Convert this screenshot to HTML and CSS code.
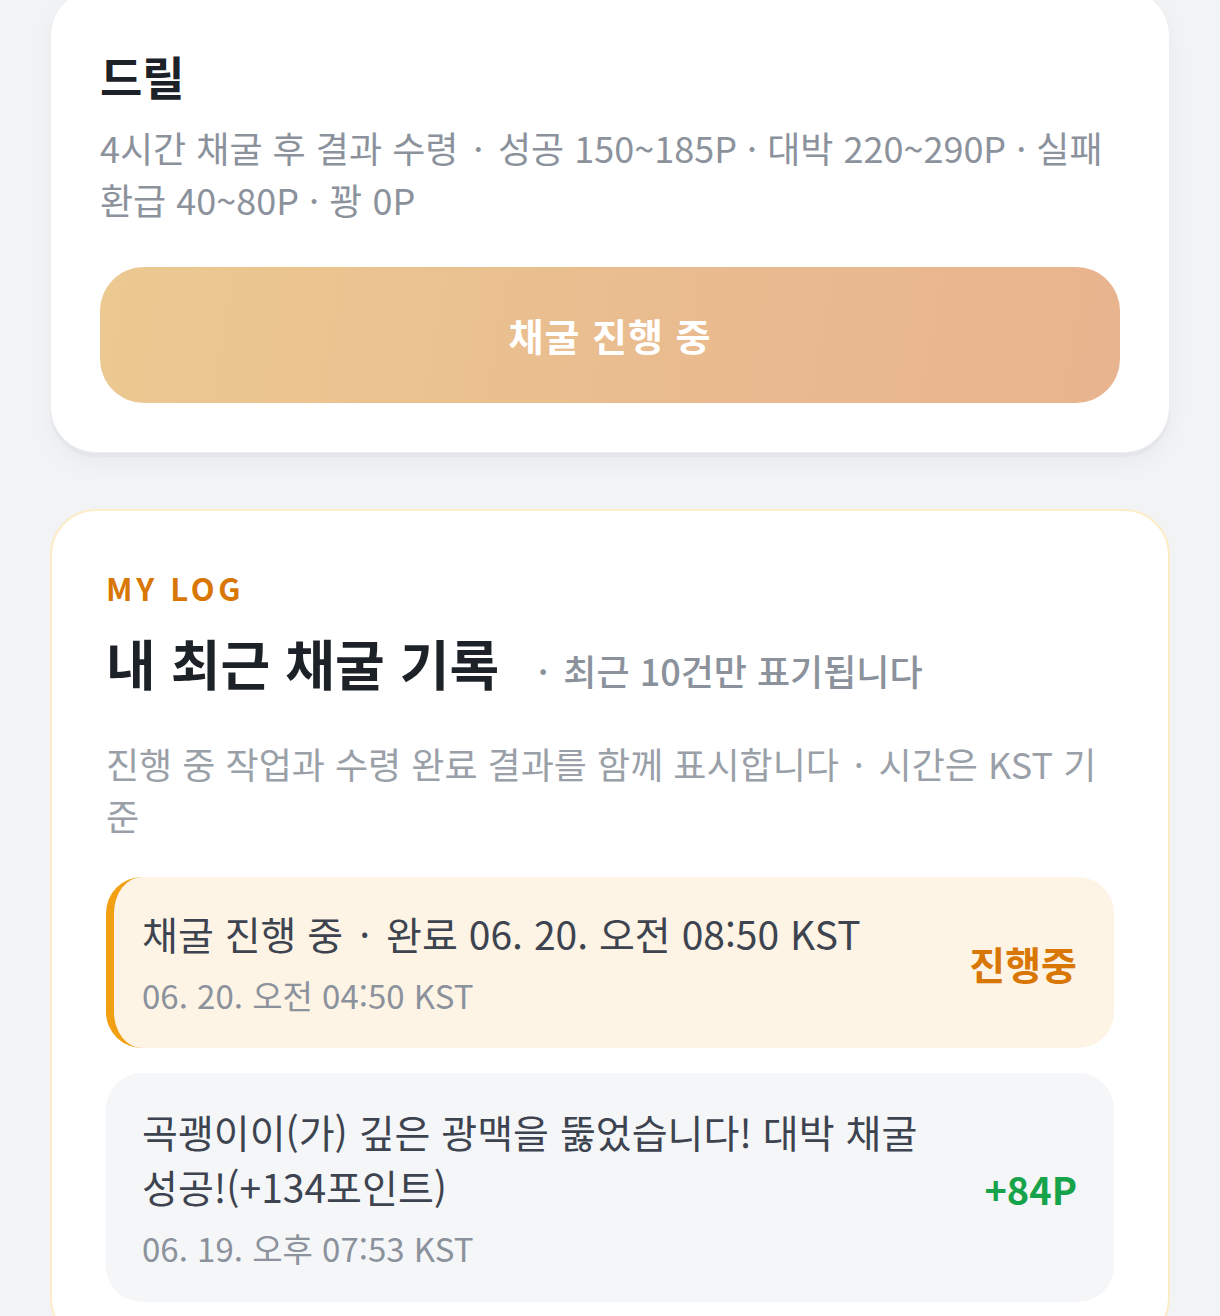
FILE: index.html
```html
<!DOCTYPE html>
<html lang="ko">
<head>
<meta charset="utf-8">
<link rel="stylesheet" href="styles.css">
</head>
<body>
<main class="page">
  <section class="card tool-card">
    <h2 class="tool-title">드릴</h2>
    <p class="tool-desc">4시간 채굴 후 결과 수령 <span class="sep">·</span> 성공 150~185P · 대박 220~290P · 실패 환급 40~80P · 꽝 0P</p>
    <button class="btn-progress" type="button">채굴 진행 중</button>
  </section>

  <section class="card log-card">
    <div class="eyebrow">MY LOG</div>
    <div class="log-head">
      <h2 class="log-title">내 최근 채굴 기록</h2>
      <span class="log-note"><span class="sep">·</span> 최근 10건만 표기됩니다</span>
    </div>
    <p class="log-desc">진행 중 작업과 수령 완료 결과를 함께 표시합니다 <span class="sep">·</span> 시간은 KST 기준</p>

    <ul class="log-list">
      <li class="log-item active">
        <div class="log-main">
          <div class="log-text">채굴 진행 중 <span class="sep">·</span> 완료 06. 20. 오전 08:50 KST</div>
          <div class="log-date">06. 20. 오전 04:50 KST</div>
        </div>
        <div class="log-status">진행중</div>
      </li>
      <li class="log-item">
        <div class="log-main">
          <div class="log-text">곡괭이이(가) 깊은 광맥을 뚫었습니다! 대박 채굴 성공!(+134포인트)</div>
          <div class="log-date">06. 19. 오후 07:53 KST</div>
        </div>
        <div class="log-points">+84P</div>
      </li>
    </ul>
  </section>
</main>
</body>
</html>
```

FILE: styles.css
```css
* { box-sizing: border-box; }

html, body {
  margin: 0;
  padding: 0;
  background: #f2f3f5;
  font-family: "Noto Sans CJK KR", "Noto Sans", sans-serif;
  color: #1f2329;
}

.page {
  padding: 0 50px 60px;
  display: flex;
  flex-direction: column;
  gap: 56px;
}

.card {
  background: #ffffff;
  border-radius: 46px;
}

.sep {
  padding: 0 0.13em;
}

.tool-card {
  margin-top: -11px;
  padding: 56px 49px 49px 49px;
  border: 1px solid #eceef1;
  box-shadow: 0 4px 0 #e4e6ea, 0 10px 24px rgba(17, 24, 39, 0.04);
}

.tool-title {
  margin: 0;
  font-size: 46px;
  font-weight: 700;
  line-height: 1.3;
  color: #1d2128;
}

.tool-desc {
  margin: 15px 0 0;
  font-size: 36px;
  line-height: 52px;
  color: #8b929c;
  font-weight: 400;
}

.btn-progress {
  display: block;
  width: 100%;
  height: 136px;
  margin-top: 42px;
  border: 0;
  border-radius: 44px;
  background: linear-gradient(100deg, #ecc991 0%, #e9bb8f 60%, #e8b48f 100%);
  color: #ffffff;
  font-family: inherit;
  font-size: 38px;
  font-weight: 700;
  letter-spacing: 1px;
}

.log-card {
  border: 2px solid #fcecc8;
  padding: 58px 54px 40px 54px;
}

.eyebrow {
  font-size: 31px;
  font-weight: 700;
  letter-spacing: 0.12em;
  color: #d97706;
  line-height: 1.2;
}

.log-head {
  display: flex;
  align-items: baseline;
  gap: 34px;
  margin-top: 22px;
}

.log-title {
  margin: 0;
  font-size: 54px;
  font-weight: 700;
  line-height: 1.3;
  color: #1d2128;
}

.log-note {
  font-size: 36px;
  font-weight: 500;
  color: #8b929c;
}

.log-desc {
  margin: 39px 0 0;
  font-size: 36px;
  line-height: 52px;
  color: #9aa0a8;
  font-weight: 400;
}

.log-list {
  list-style: none;
  margin: 36px 0 0;
  padding: 0;
  display: flex;
  flex-direction: column;
  gap: 25px;
}

.log-item {
  display: flex;
  align-items: center;
  gap: 40px;
  padding: 31px 37px 30px 36px;
  border-radius: 36px;
  background: #f5f6f8;
}

.log-item.active {
  background: #fef4e5;
  border-left: 8px solid #f1a013;
  padding-left: 28px;
  padding-top: 29px;
  padding-bottom: 29px;
}

.log-main {
  flex: 1;
  min-width: 0;
}

.log-text {
  font-size: 39px;
  line-height: 55px;
  color: #3d4450;
}

.log-date {
  margin-top: 10px;
  font-size: 33px;
  line-height: 48px;
  color: #8b929c;
}

.log-status {
  font-size: 39px;
  font-weight: 700;
  color: #d97706;
}

.log-points {
  font-size: 38px;
  font-weight: 700;
  color: #16a34a;
}
```
